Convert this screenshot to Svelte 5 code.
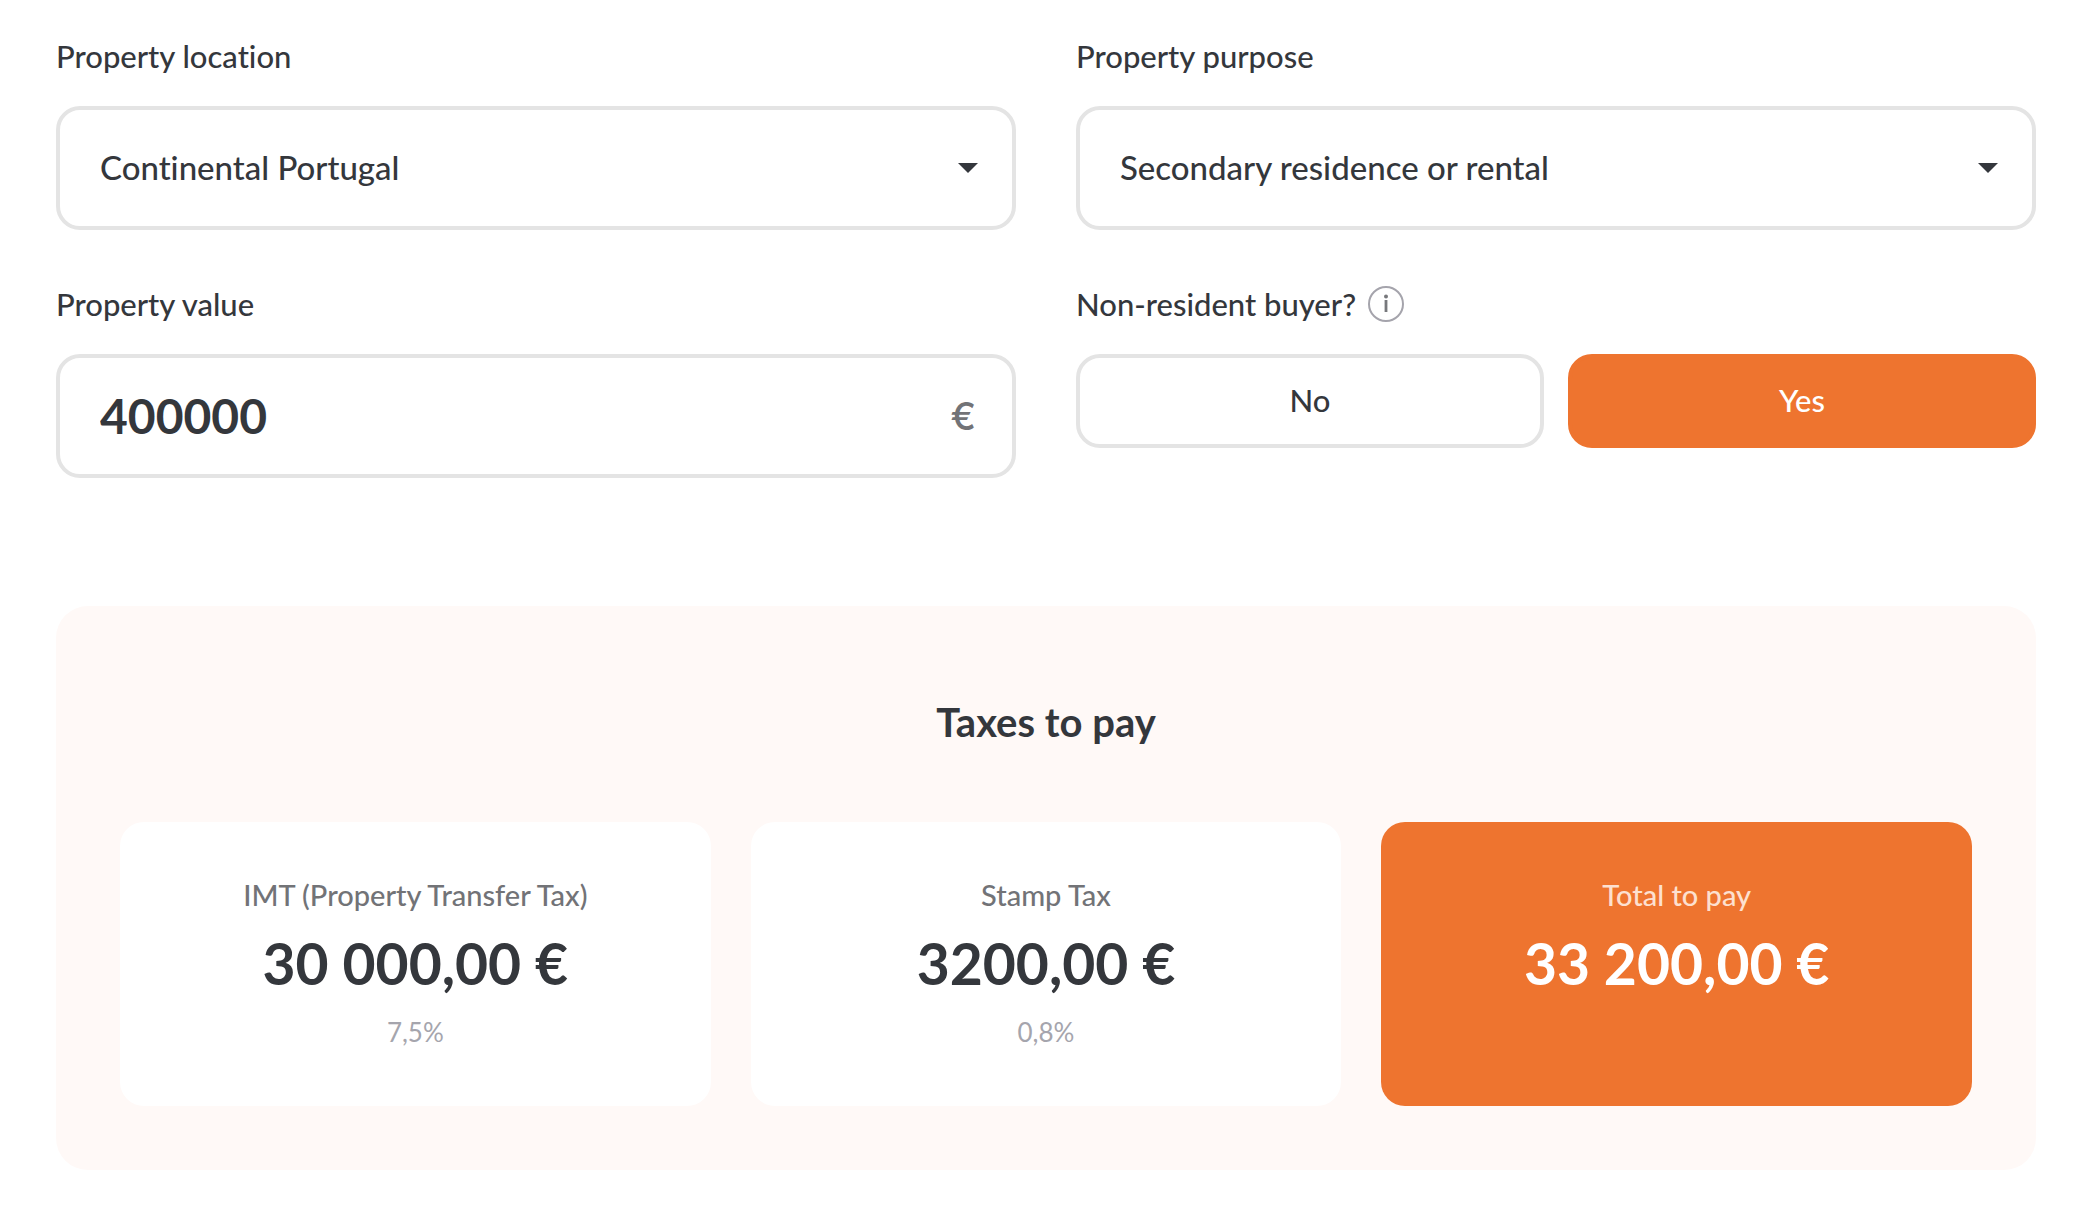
<script lang="ts">
	interface Result {
		label: string;
		amount: string;
		rate?: string;
		highlighted?: boolean;
	}

	let location = $state('Continental Portugal');
	let purpose = $state('Secondary residence or rental');
	let propertyValue = $state('400000');
	let nonResident = $state(true);

	const locations = ['Continental Portugal', 'Madeira', 'Azores'];
	const purposes = ['Primary residence', 'Secondary residence or rental'];

	const results: Result[] = [
		{ label: 'IMT (Property Transfer Tax)', amount: '30 000,00 €', rate: '7,5%' },
		{ label: 'Stamp Tax', amount: '3200,00 €', rate: '0,8%' },
		{ label: 'Total to pay', amount: '33 200,00 €', highlighted: true }
	];
</script>

{#snippet caret()}
	<svg class="caret" viewBox="0 0 20 10" aria-hidden="true">
		<path d="M0 0h20L10 10z" fill="currentColor" />
	</svg>
{/snippet}

<main class="calculator">
	<form class="fields">
		<div class="field">
			<label class="field-label" for="location">Property location</label>
			<div class="control">
				<select id="location" bind:value={location}>
					{#each locations as option}
						<option>{option}</option>
					{/each}
				</select>
				{@render caret()}
			</div>
		</div>

		<div class="field">
			<label class="field-label" for="purpose">Property purpose</label>
			<div class="control">
				<select id="purpose" bind:value={purpose}>
					{#each purposes as option}
						<option>{option}</option>
					{/each}
				</select>
				{@render caret()}
			</div>
		</div>

		<div class="field">
			<label class="field-label" for="value">Property value</label>
			<div class="control">
				<input id="value" type="text" inputmode="numeric" bind:value={propertyValue} />
				<span class="currency">€</span>
			</div>
		</div>

		<div class="field" role="group" aria-labelledby="resident-label">
			<div class="field-label">
				<span id="resident-label">Non-resident buyer?</span>
				<button type="button" class="info" aria-label="More information">
					<svg viewBox="0 0 36 36" aria-hidden="true">
						<circle cx="18" cy="18" r="17" fill="none" stroke="#a5a4ac" stroke-width="2" />
						<circle cx="18" cy="10.5" r="2" fill="#77787c" />
						<path d="M18 14v12" stroke="#77787c" stroke-width="2.8" />
					</svg>
				</button>
			</div>
			<div class="toggle">
				<button
					type="button"
					class:active={!nonResident}
					aria-pressed={!nonResident}
					onclick={() => (nonResident = false)}>No</button
				>
				<button
					type="button"
					class:active={nonResident}
					aria-pressed={nonResident}
					onclick={() => (nonResident = true)}>Yes</button
				>
			</div>
		</div>
	</form>

	<section class="results">
		<h2>Taxes to pay</h2>
		<div class="cards">
			{#each results as result}
				<div class="card" class:highlighted={result.highlighted}>
					<div class="card-label">{result.label}</div>
					<div class="amount">{result.amount}</div>
					{#if result.rate}
						<div class="rate">{result.rate}</div>
					{/if}
				</div>
			{/each}
		</div>
	</section>
</main>

<style>
	:global(body) {
		background: #fff;
	}

	.calculator {
		padding: 38px 48px 42px 56px;
		color: #34373c;
		font-family: Lato, 'Liberation Sans', sans-serif;
		font-weight: 500;
		font-variant-ligatures: none;
	}

	.calculator * {
		box-sizing: border-box;
	}

	button,
	input,
	select {
		font: inherit;
		font-variant-ligatures: none;
		color: inherit;
	}

	.fields {
		display: grid;
		grid-template-columns: 1fr 1fr;
		align-items: start;
		gap: 56px 60px;
	}

	.field {
		display: flex;
		flex-direction: column;
		gap: 32px;
	}

	.field-label {
		display: flex;
		align-items: center;
		gap: 12px;
		font-size: 31px;
		line-height: 36px;
	}

	.control {
		display: flex;
		align-items: center;
		position: relative;
		height: 124px;
		border: 4px solid #e4e4e4;
		border-radius: 24px;
	}

	select,
	input {
		flex: 1;
		min-width: 0;
		height: 100%;
		border: 0;
		padding: 0 40px 2px;
		background: transparent;
		outline: none;
	}

	select {
		appearance: none;
		font-size: 33px;
	}

	input {
		font-size: 48px;
		font-weight: 700;
	}

	.caret {
		position: absolute;
		right: 34px;
		width: 20px;
		height: 10px;
		pointer-events: none;
	}

	.currency {
		padding-right: 36px;
		color: #727377;
		font-family: Inter, 'Liberation Sans', sans-serif;
		font-size: 38px;
	}

	.info {
		display: flex;
		width: 36px;
		height: 36px;
		border: 0;
		padding: 0;
		background: none;
	}

	.toggle {
		display: grid;
		grid-template-columns: 1fr 1fr;
		gap: 24px;
	}

	.toggle button {
		height: 94px;
		border: 4px solid #e4e4e4;
		border-radius: 24px;
		padding: 0 24px 2px;
		background: #fff;
		font-size: 31px;
	}

	.toggle button.active {
		border-color: #ee742f;
		background: #ee742f;
		color: #fff;
	}

	.results {
		margin-top: 128px;
		border-radius: 32px;
		padding: 96px 64px 64px;
		background: #fff9f7;
		text-align: center;
	}

	h2 {
		margin: 0 0 80px;
		font-size: 40px;
		font-weight: 700;
		line-height: 40px;
	}

	.cards {
		display: grid;
		grid-template-columns: repeat(3, 1fr);
		gap: 40px;
	}

	.card {
		display: flex;
		flex-direction: column;
		gap: 8px;
		border-radius: 24px;
		padding: 48px;
		background: #fff;
	}

	.card-label {
		color: #727377;
		font-size: 29px;
		line-height: 50px;
	}

	.amount {
		font-size: 57px;
		font-weight: 700;
		line-height: 70px;
	}

	.rate {
		color: #a5a5ad;
		font-size: 26px;
		font-weight: 400;
		line-height: 52px;
	}

	.highlighted {
		background: #ee742f;
		color: #fff;
	}

	.highlighted .card-label {
		color: #fde0d0;
	}
</style>
